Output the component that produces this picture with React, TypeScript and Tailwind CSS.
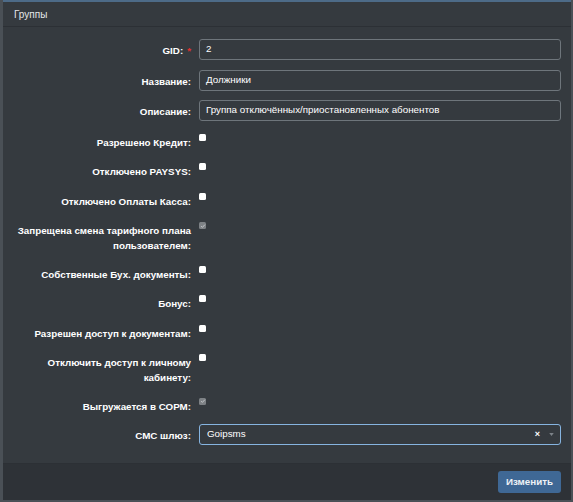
import React from "react";

type Row =
  | { kind: "input"; label: string; value: string; required?: boolean }
  | { kind: "check"; label: string[]; checked?: boolean }
  | { kind: "select"; label: string; value: string };

const rows: Row[] = [
  { kind: "input", label: "GID:", value: "2", required: true },
  { kind: "input", label: "Название:", value: "Должники" },
  { kind: "input", label: "Описание:", value: "Группа отключённых/приостановленных абонентов" },
  { kind: "check", label: ["Разрешено Кредит:"] },
  { kind: "check", label: ["Отключено PAYSYS:"] },
  { kind: "check", label: ["Отключено Оплаты Касса:"] },
  { kind: "check", label: ["Запрещена смена тарифного плана", "пользователем:"], checked: true },
  { kind: "check", label: ["Собственные Бух. документы:"] },
  { kind: "check", label: ["Бонус:"] },
  { kind: "check", label: ["Разрешен доступ к документам:"] },
  { kind: "check", label: ["Отключить доступ к личному", "кабинету:"] },
  { kind: "check", label: ["Выгружается в СОРМ:"], checked: true },
  { kind: "select", label: "СМС шлюз:", value: "Goipsms" },
];

function Checkbox({ checked }: { checked?: boolean }) {
  if (checked) {
    return (
      <span className="mt-[3px] flex h-[7px] w-[7px] items-center justify-center rounded-[1.5px] bg-[#7d8185]">
        <svg viewBox="0 0 8 8" className="h-[6px] w-[6px]">
          <path d="M1.5 4.2 L3.2 5.8 L6.5 2.2" fill="none" stroke="#c9cccf" strokeWidth="1.2" />
        </svg>
      </span>
    );
  }
  return <span className="mt-[3px] block h-[7px] w-[7px] rounded-[1.5px] bg-white" />;
}

function Label({ lines, required }: { lines: string[]; required?: boolean }) {
  return (
    <div className="w-[188px] shrink-0 pt-[4px] pb-[1px] text-right text-[9.8px] font-bold leading-[15px] text-white">
      {lines.map((l, i) => (
        <div key={i}>
          {l}
          {required && i === lines.length - 1 && (
            <span className="ml-[4px] text-[#e0312f]">*</span>
          )}
        </div>
      ))}
    </div>
  );
}

export default function App() {
  return (
    <div
      className="h-[502px] w-[573px] bg-[#4a5056] pl-[3px] pr-[2px] pb-[2px]"
      style={{ fontFamily: '"Liberation Sans", Arial, sans-serif' }}
    >
      <div className="flex h-full flex-col border-t-2 border-[#4d6b88] bg-[#353a3f]">
        <div className="flex h-[25px] items-center border-b border-[#2c3035] pl-[11px] text-[10px] text-[#e4e6e8]">
          Группы
        </div>

        <div className="flex flex-1 flex-col gap-[8.5px] pt-[12px] pr-[10px]">
          {rows.map((r, i) => (
            <div
              key={i}
              className={`flex items-start gap-[8px] ${r.kind === "input" ? "h-[22px]" : "min-h-[21px]"}`}
            >
              {r.kind === "input" && (
                <>
                  <Label lines={[r.label]} required={r.required} />
                  <div className="flex h-[21px] flex-1 items-center rounded-[3px] border border-[#6e757b] px-[6px] text-[9.8px] text-white">
                    {r.value}
                  </div>
                </>
              )}
              {r.kind === "check" && (
                <>
                  <Label lines={r.label} />
                  <Checkbox checked={r.checked} />
                </>
              )}
              {r.kind === "select" && (
                <>
                  <Label lines={[r.label]} />
                  <div className="flex h-[21px] flex-1 items-center rounded-[3px] border border-[#86b4e0] pl-[7px] pr-[6px] text-[9.8px] text-white">
                    <span className="flex-1">{r.value}</span>
                    <span className="text-[9px] font-bold leading-none text-white">×</span>
                    <svg viewBox="0 0 6 4" className="ml-[9px] h-[3px] w-[5px]">
                      <path d="M0 0 H6 L3 4 Z" fill="#7d8389" />
                    </svg>
                  </div>
                </>
              )}
            </div>
          ))}
        </div>

        <div className="flex h-[37px] items-center justify-end border-t border-[#2c3035] bg-[#2e3237] pr-[10px]">
          <button className="h-[22px] rounded-[3px] bg-[#3f6895] px-[8px] text-[9.8px] font-bold text-[#eef2f6]">
            Изменить
          </button>
        </div>
      </div>
    </div>
  );
}
